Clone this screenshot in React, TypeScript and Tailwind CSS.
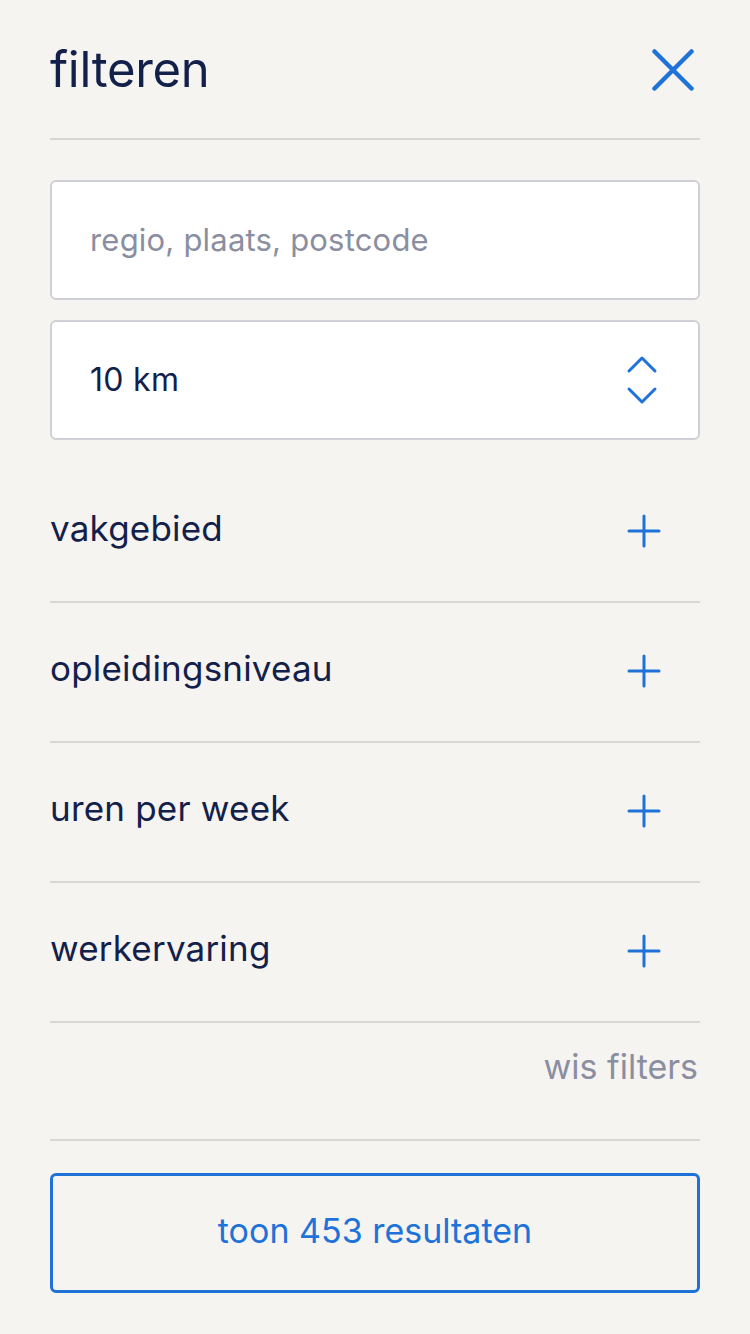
import React from 'react';

function PlusIcon() {
    return (
        <svg width="34" height="34" viewBox="0 0 34 34" fill="none" stroke="#1f72d8" strokeWidth="3" strokeLinecap="round">
            <path d="M17 2v30M2 17h30" />
        </svg>
    );
}

export default function App() {
    const sections = ['vakgebied', 'opleidingsniveau', 'uren per week', 'werkervaring'];

    return (
        <div className="min-h-[1334px] w-[750px] bg-[#f5f4f0] px-[50px] text-[#13204a]" style={{ fontFamily: 'Inter, "Noto Sans", sans-serif' }}>
            {/* Header */}
            <div className="flex items-start justify-between h-[140px] pt-[45px] border-b-2 border-[#d8d7d4]">
                <h1 className="text-[49px] leading-none font-normal tracking-[-0.3px]">filteren</h1>
                <svg width="42" height="42" viewBox="0 0 42 42" fill="none" stroke="#1f72d8" strokeWidth="4.5" strokeLinecap="round" className="mr-[6px] mt-[4px]">
                    <path d="M2.5 2.5l37 37M39.5 2.5l-37 37" />
                </svg>
            </div>

            {/* Location */}
            <div className="mt-[40px] h-[120px] rounded-[6px] border-2 border-[#cfd0d5] bg-white flex items-center px-[38px]">
                <span className="text-[31px] text-[#8a8ea0] tracking-[0.2px]">regio, plaats, postcode</span>
            </div>

            {/* Distance */}
            <div className="mt-[20px] h-[120px] rounded-[6px] border-2 border-[#cfd0d5] bg-white flex items-center justify-between pl-[38px] pr-[40px]">
                <span className="text-[32px] tracking-[0.3px]">10 km</span>
                <svg width="32" height="50" viewBox="0 0 32 50" fill="none" stroke="#1f72d8" strokeWidth="3" strokeLinecap="round" strokeLinejoin="round">
                    <path d="M3 16L16 3l13 13M3 34l13 13 13-13" />
                </svg>
            </div>

            {/* Filter sections */}
            <div className="mt-[23px]">
                {sections.map((s) => (
                    <div key={s} className="h-[140px] border-b-2 border-[#d8d7d4] flex items-start justify-between">
                        <span className="text-[35px] leading-[40px] mt-[45px] tracking-[0.2px]">{s}</span>
                        <div className="mt-[51px] mr-[39px]">
                            <PlusIcon />
                        </div>
                    </div>
                ))}
            </div>

            {/* Clear */}
            <div className="h-[118px] border-b-2 border-[#d8d7d4] flex justify-end items-start">
                <span className="text-[34px] leading-[40px] text-[#8a8ea0] mt-[24px] mr-[2px]">wis filters</span>
            </div>

            {/* Submit */}
            <button className="mt-[32px] w-full h-[120px] rounded-[6px] border-[3px] border-[#1f72d8] flex items-center justify-center pb-[6px]">
                <span className="text-[34px] text-[#1f72d8]">toon 453 resultaten</span>
            </button>
        </div>
    );
}
